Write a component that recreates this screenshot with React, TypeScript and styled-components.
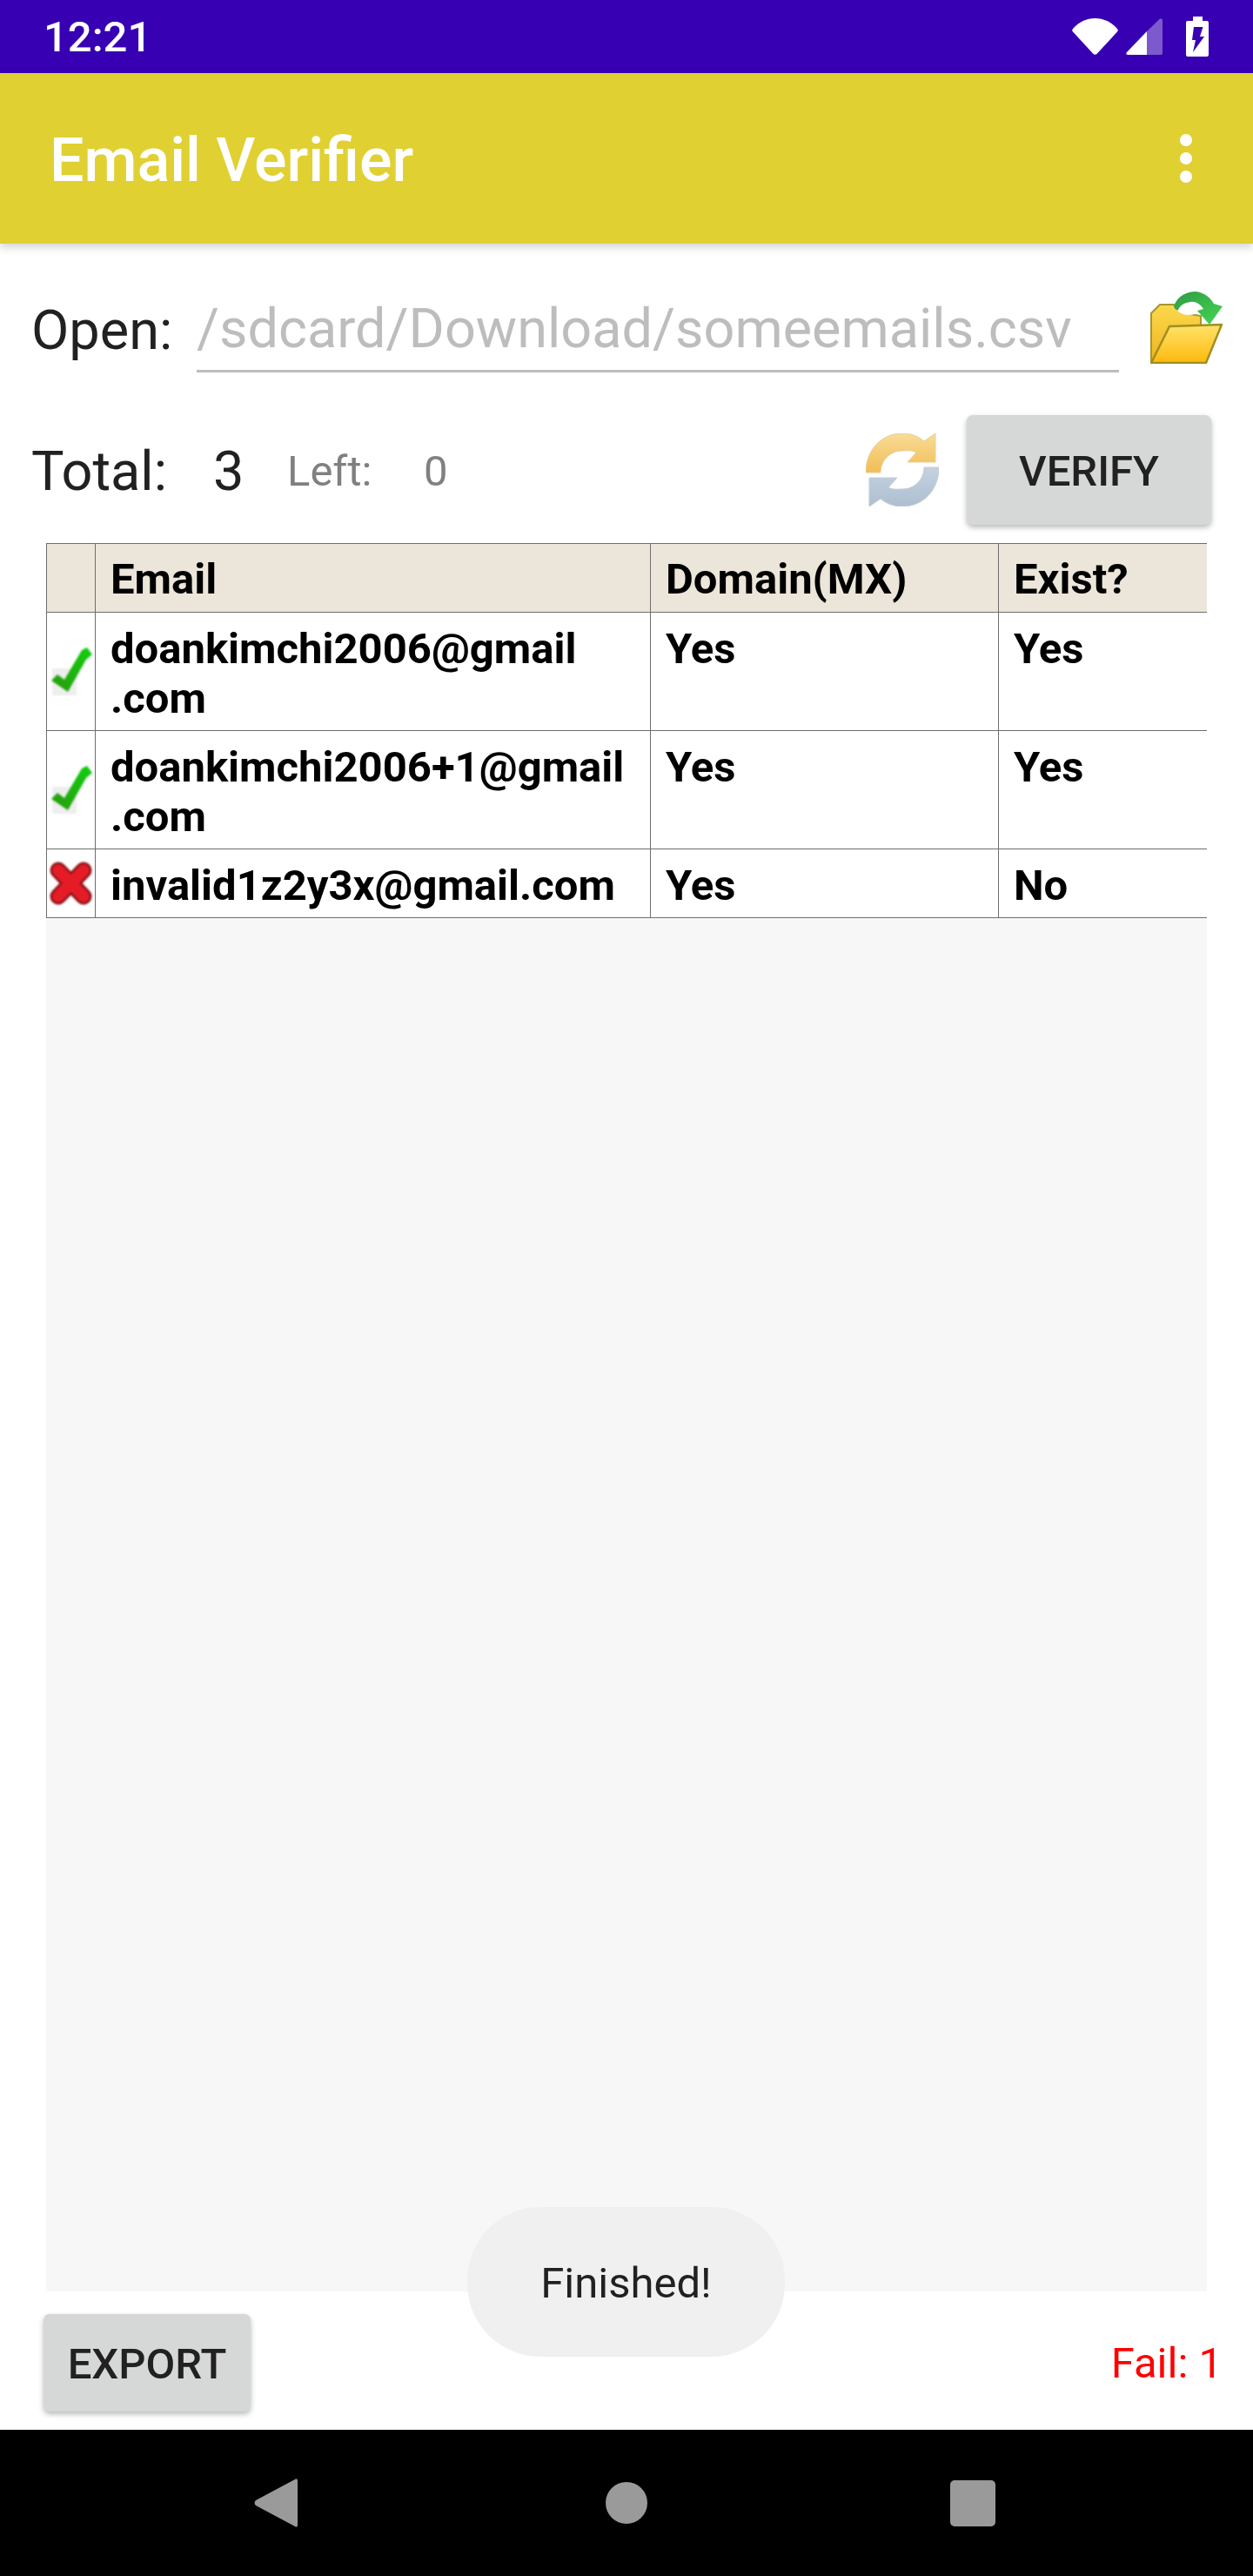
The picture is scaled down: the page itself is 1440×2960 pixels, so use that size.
import React from "react";
import styled, { createGlobalStyle } from "styled-components";

const GlobalStyle = createGlobalStyle`
  html, body {
    margin: 0;
    padding: 0;
    background: #fff;
  }
  * {
    box-sizing: border-box;
  }
`;

const Screen = styled.div`
  width: 1440px;
  height: 2960px;
  position: relative;
  display: flex;
  flex-direction: column;
  overflow: hidden;
  font-family: Roboto, "Liberation Sans", sans-serif;
  color: #212121;
  background: #fff;
`;

const StatusBar = styled.div`
  height: 84px;
  flex: none;
  display: flex;
  align-items: center;
  justify-content: space-between;
  padding: 0 51px 0 50px;
  background: #3700b3;
  color: #fff;
`;

const Clock = styled.span`
  font-size: 49px;
  font-weight: 500;
  line-height: 84px;
  padding-top: 2px;
`;

const StatusIcons = styled.div`
  display: flex;
  align-items: center;
  gap: 9px;
  margin-top: -1px;
`;

const Battery = styled.svg`
  margin-left: 18px;
`;

const AppBar = styled.div`
  height: 196px;
  flex: none;
  position: relative;
  z-index: 1;
  display: flex;
  align-items: center;
  justify-content: space-between;
  padding: 0 70px 0 57px;
  background: #e0d032;
  box-shadow: 0 4px 10px rgba(0, 0, 0, 0.18);
`;

const Title = styled.h1`
  margin: 0;
  padding-top: 3px;
  font-size: 70px;
  font-weight: 500;
  color: #fff;
`;

const Dots = styled.div`
  display: flex;
  flex-direction: column;
  gap: 7px;
`;

const Dot = styled.span`
  width: 14px;
  height: 14px;
  border-radius: 50%;
  background: #fff;
`;

const Content = styled.main`
  flex: 1;
  min-height: 0;
  display: flex;
  flex-direction: column;
`;

const OpenRow = styled.div`
  display: flex;
  align-items: flex-start;
  margin-top: 55px;
  padding: 0 35px 0 36px;
`;

const FieldLabel = styled.label`
  width: 190px;
  flex: none;
  font-size: 63px;
  line-height: 90px;
`;

const PathInput = styled.input`
  width: 1060px;
  height: 93px;
  padding: 0 0 5px;
  border: 0;
  border-bottom: 3px solid #bdbdbd;
  outline: 0;
  background: transparent;
  font-family: inherit;
  font-size: 63px;
  color: #212121;

  &::placeholder {
    color: #bdbdbd;
    opacity: 1;
  }
`;

const FolderIcon = styled.svg`
  margin-left: 36px;
  flex: none;
`;

const TotalRow = styled.div`
  display: flex;
  align-items: center;
  height: 126px;
  margin-top: 49px;
  padding: 0 48px 0 36px;
`;

const Count = styled.span<{ $width: number; $muted?: boolean }>`
  width: ${(p) => p.$width}px;
  flex: none;
  padding-top: 3px;
  font-size: ${(p) => (p.$muted ? 49 : 63)}px;
  color: ${(p) => (p.$muted ? "#808080" : "#212121")};
`;

const RefreshIcon = styled.svg`
  margin-left: auto;
  margin-right: 32px;
  flex: none;
  filter: blur(0.5px);
`;

const RaisedButton = styled.button<{ $width: number; $height: number }>`
  width: ${(p) => p.$width}px;
  height: ${(p) => p.$height}px;
  flex: none;
  padding: 3px 0 0;
  border: 0;
  border-radius: 7px;
  background: #d6d7d7;
  box-shadow: 0 3px 6px rgba(0, 0, 0, 0.28);
  font-family: inherit;
  font-size: 49px;
  font-weight: 500;
  color: #212121;
`;

const TablePanel = styled.section`
  flex: 1;
  min-height: 0;
  margin: 21px 53px 0;
  background: #f7f7f7;
  overflow: hidden;
`;

const ResultTable = styled.table`
  width: 1334px;
  border-collapse: collapse;
  table-layout: fixed;
  background: #fff;
  font-size: 49px;
  font-weight: 700;
  color: #000;
`;

const HeadCell = styled.th<{ $width: number }>`
  width: ${(p) => p.$width}px;
  height: 79px;
  padding: 3px 17px 0;
  border: 1px solid #6e6e6e;
  background: #ece6da;
  font-weight: 700;
  text-align: left;
  line-height: 57px;
`;

const LastHeadCell = styled(HeadCell)`
  border-right: 0;
`;

const Cell = styled.td`
  padding: 13px 17px 8px;
  border: 1px solid #6e6e6e;
  vertical-align: top;
  line-height: 57px;
  white-space: pre-line;
`;

const LastCell = styled(Cell)`
  border-right: 0;
`;

const IconCell = styled.td`
  padding: 0;
  border: 1px solid #6e6e6e;
  vertical-align: middle;
  text-align: center;
  line-height: 0;
`;

const StateIcon = styled.svg`
  filter: blur(0.8px);
`;

const FooterRow = styled.div`
  display: flex;
  align-items: center;
  justify-content: space-between;
  margin-top: 26px;
  margin-bottom: 21px;
  padding: 0 35px 0 50px;
`;

const FailLabel = styled.span`
  font-size: 49px;
  color: #f00;
`;

const Toast = styled.div`
  position: absolute;
  left: 537px;
  top: 2536px;
  width: 365px;
  height: 172px;
  padding-top: 2px;
  display: flex;
  align-items: center;
  justify-content: center;
  border-radius: 84px;
  background: #f0f0f0;
  font-size: 49px;
`;

const NavBar = styled.nav`
  height: 168px;
  flex: none;
  display: flex;
  align-items: center;
  justify-content: space-between;
  padding: 0 296px 0 291px;
  background: #000;
`;

const NavIcon = styled.svg<{ $nudge?: number }>`
  margin-left: ${(p) => p.$nudge ?? 0}px;
  fill: #9a9a9a;
`;

const rows = [
  { ok: true, email: "doankimchi2006@gmail\n.com", domain: "Yes", exist: "Yes" },
  { ok: true, email: "doankimchi2006+1@gmail\n.com", domain: "Yes", exist: "Yes" },
  { ok: false, email: "invalid1z2y3x@gmail.com", domain: "Yes", exist: "No" },
];

function CheckMark({ id }: { id: string }) {
  return (
    <StateIcon width="49" height="55" viewBox="0 0 49 55">
      <defs>
        <linearGradient id={id} x1="0" y1="1" x2="1" y2="0">
          <stop offset="0" stopColor="#2a9a0c" />
          <stop offset="1" stopColor="#10d010" />
        </linearGradient>
      </defs>
      <rect x="3" y="24" width="28" height="31" fill="#eeeeee" />
      <path d="M43 0 L49 8 L42 14 L21 51 L2 38 L9 31 L17 37 L37 3 Z" fill={`url(#${id})`} />
    </StateIcon>
  );
}

function CrossMark() {
  return (
    <StateIcon width="49" height="50" viewBox="0 0 49 50">
      <path d="M10 10 L39 40 M39 10 L10 40" stroke="#8a1018" strokeWidth="19" strokeLinecap="round" />
      <path d="M10 10 L39 40 M39 10 L10 40" stroke="#e51c26" strokeWidth="14" strokeLinecap="round" />
    </StateIcon>
  );
}

export default function App() {
  return (
    <Screen>
      <GlobalStyle />
      <StatusBar>
        <Clock>12:21</Clock>
        <StatusIcons>
          <svg width="53" height="42" viewBox="0 0 53 42" fill="#fff">
            <path d="M1 12 C8 4 17 0 26.5 0 C36 0 45 4 52 12 Q53.5 14 52 15.500 L28.500 41 Q26.500 42.500 24.500 41 L1 15.500 Q-.5 14 1 12 Z" />
          </svg>
          <svg width="42" height="42" viewBox="0 0 42 42" fill="#fff">
            <path d="M1 39 L24 15 L24 42 L2 42 Q-1 41.500 1 39 Z" />
            <path d="M24 15 L38.500 1 Q42 -1 42 3 L42 40 Q42 42 40 42 L24 42 Z" opacity=".35" />
          </svg>
          <Battery width="26" height="46" viewBox="0 0 26 46">
            <path
              fill="#fff"
              fillRule="evenodd"
              d="M8 0 H19 V5 H24 Q26 5 26 7 V44 Q26 46 24 46 H2 Q0 46 0 44 V7 Q0 5 2 5 H8 Z M9 12 L7 27 H11 L8 41 L21 23 H16 L19.500 12 Z"
            />
          </Battery>
        </StatusIcons>
      </StatusBar>

      <AppBar>
        <Title>Email Verifier</Title>
        <Dots>
          <Dot />
          <Dot />
          <Dot />
        </Dots>
      </AppBar>

      <Content>
        <OpenRow>
          <FieldLabel htmlFor="path">Open:</FieldLabel>
          <PathInput id="path" placeholder="/sdcard/Download/someemails.csv" />
          <FolderIcon width="83" height="83" viewBox="0 0 83 83">
            <defs>
              <linearGradient id="folderBack" x1="0" y1="0" x2="0" y2="1">
                <stop offset="0" stopColor="#fbd84e" />
                <stop offset="1" stopColor="#eeb51c" />
              </linearGradient>
              <linearGradient id="folderFront" x1="0" y1="0" x2="0" y2="1">
                <stop offset="0" stopColor="#ffe36a" />
                <stop offset="1" stopColor="#ffb90c" />
              </linearGradient>
              <linearGradient id="folderArrow" x1="0" y1="0" x2="1" y2="1">
                <stop offset="0" stopColor="#2f9a42" />
                <stop offset="1" stopColor="#45d855" />
              </linearGradient>
            </defs>
            <path d="M1 82 V25 L11 15 H27 L35 24 L58 28 V60 L1 82 Z" fill="url(#folderBack)" stroke="#a8962c" strokeWidth="2" />
            <path d="M22 40 L82 38 L64 82 H1 Z" fill="url(#folderFront)" stroke="#a08e22" strokeWidth="2.500" />
            <ellipse cx="44" cy="20" rx="13" ry="7" fill="#fff" />
            <path
              d="M27 17 C31 5 42 0 52 0 C62 1 69 7 73 14 L83 17 L68 38 L54 22 L61 20 C57 14 52 11 46 12 C39 13 35 15 32 21 C30 22 28 20 27 17 Z"
              fill="url(#folderArrow)"
            />
          </FolderIcon>
        </OpenRow>

        <TotalRow>
          <Count $width={209}>Total:</Count>
          <Count $width={85}>3</Count>
          <Count $width={157} $muted>
            Left:
          </Count>
          <Count $width={30} $muted>
            0
          </Count>
          <RefreshIcon width="84" height="84" viewBox="0 0 84 84">
            <defs>
              <linearGradient id="refreshTop" x1="0" y1="0" x2="0" y2="1">
                <stop offset="0" stopColor="#f8dc96" />
                <stop offset="1" stopColor="#f2bd55" />
              </linearGradient>
              <linearGradient id="refreshBottom" x1="0" y1="0" x2="0" y2="1">
                <stop offset="0" stopColor="#c4d2e0" />
                <stop offset="1" stopColor="#aebfd0" />
              </linearGradient>
            </defs>
            <path
              d="M0 45 C0 19 18 0 42 0 C52 0 60 3 67 9 L80 0 V33 H48 L58 22 C53 19 48 20 42 20 C28 20 17 31 17 45 Z"
              fill="url(#refreshTop)"
              stroke="#e5cf9c"
              strokeWidth="1"
            />
            <path
              d="M84 39 C84 65 66 84 42 84 C32 84 24 81 17 75 L4 84 V51 H36 L26 62 C31 65 36 64 42 64 C56 64 67 53 67 39 Z"
              fill="url(#refreshBottom)"
              stroke="#c3ccd6"
              strokeWidth="1"
            />
          </RefreshIcon>
          <RaisedButton $width={281} $height={126}>
            VERIFY
          </RaisedButton>
        </TotalRow>

        <TablePanel>
          <ResultTable>
            <thead>
              <tr>
                <HeadCell $width={56} />
                <HeadCell $width={638}>Email</HeadCell>
                <HeadCell $width={400}>Domain(MX)</HeadCell>
                <LastHeadCell $width={240}>Exist?</LastHeadCell>
              </tr>
            </thead>
            <tbody>
              {rows.map((row, i) => (
                <tr key={row.email}>
                  <IconCell>{row.ok ? <CheckMark id={`check${i}`} /> : <CrossMark />}</IconCell>
                  <Cell>{row.email}</Cell>
                  <Cell>{row.domain}</Cell>
                  <LastCell>{row.exist}</LastCell>
                </tr>
              ))}
            </tbody>
          </ResultTable>
        </TablePanel>

        <FooterRow>
          <RaisedButton $width={238} $height={112}>
            EXPORT
          </RaisedButton>
          <FailLabel>Fail: 1</FailLabel>
        </FooterRow>
      </Content>

      <NavBar>
        <NavIcon width="52" height="56" viewBox="0 0 52 56">
          <path d="M48 1 Q51 -1 51 3 V53 Q51 57 48 55 L3 31 Q0 28 3 25 Z" />
        </NavIcon>
        <NavIcon width="52" height="52" viewBox="0 0 52 52" $nudge={5}>
          <circle cx="26" cy="26" r="24" />
        </NavIcon>
        <NavIcon width="52" height="53" viewBox="0 0 52 53">
          <rect width="52" height="53" rx="5" />
        </NavIcon>
      </NavBar>

      <Toast>Finished!</Toast>
    </Screen>
  );
}
